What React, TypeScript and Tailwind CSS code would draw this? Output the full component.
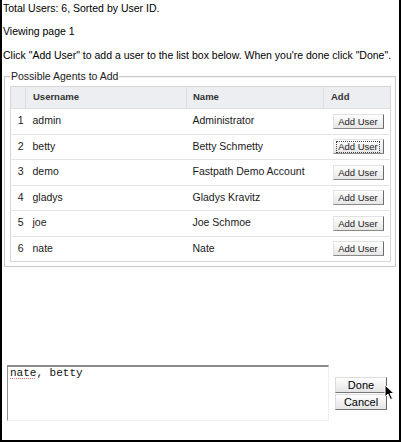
import React from 'react';

const users = [
  { id: 1, username: 'admin', name: 'Administrator' },
  { id: 2, username: 'betty', name: 'Betty Schmetty', focused: true },
  { id: 3, username: 'demo', name: 'Fastpath Demo Account' },
  { id: 4, username: 'gladys', name: 'Gladys Kravitz' },
  { id: 5, username: 'joe', name: 'Joe Schmoe' },
  { id: 6, username: 'nate', name: 'Nate' },
];

const AddUserButton: React.FC<{ focused?: boolean }> = ({ focused }) => (
  <button className="w-[51px] h-[15px] flex items-center justify-center bg-gradient-to-b from-white to-[#e6e6e6] border-t border-l border-[#e2e2e2] border-r border-b border-r-[#6a6a6a] border-b-[#8a8a8a] text-[9.5px] leading-none text-[#222]">
    <span className={focused ? 'outline outline-1 outline-dotted outline-[#444] px-[1px]' : 'px-[1px]'}>Add User</span>
  </button>
);

const SideButton: React.FC<{ label: string }> = ({ label }) => (
  <button className="w-[52px] h-[16px] flex items-center justify-center bg-gradient-to-b from-white to-[#e4e4e4] border-t border-l border-[#dcdcdc] border-r border-b border-r-[#666] border-b-[#777] text-[11px] leading-none text-black">
    {label}
  </button>
);

export default function App() {
  return (
    <div
      className="relative w-[401px] h-[442px] bg-white border-l-2 border-r-2 border-b-2 border-black text-black text-[10.5px]"
      style={{ fontFamily: '"Liberation Sans", Arial, Helvetica, sans-serif' }}
    >
      <div className="pl-[1px] pt-[1px] leading-[14px]">Total Users: 6, Sorted by User ID.</div>
      <div className="pl-[1px] mt-[9px] leading-[14px]">Viewing page 1</div>
      <div className="pl-[1px] mt-[10px] leading-[14px]">
        Click "Add User" to add a user to the list box below. When you're done click "Done".
      </div>

      <fieldset className="mt-[7px] ml-[2px] w-[392px] border border-[#c9c9c9] pl-[5px] pr-[4px] pt-[3px] pb-[4px] shadow-[inset_0_1px_0_#f2f2f2]">
        <legend className="px-[1px] leading-[14px] text-[#222]">Possible Agents to Add</legend>
        <table className="w-[380px] border border-[#d6d6d6] border-collapse table-fixed">
          <colgroup>
            <col className="w-[15px]" />
            <col className="w-[161px]" />
            <col className="w-[137px]" />
            <col className="w-[67px]" />
          </colgroup>
          <thead>
            <tr className="h-[22px] bg-[#eceef1] text-[9.5px] font-bold text-[#333]">
              <th className="border-r border-b border-[#dedede]"></th>
              <th className="border-r border-b border-[#dedede] text-left pl-[7px]">Username</th>
              <th className="border-r border-b border-[#dedede] text-left pl-[6px]">Name</th>
              <th className="border-b border-[#dedede] text-left pl-[7px]">Add</th>
            </tr>
          </thead>
          <tbody>
            {users.map((u) => (
              <tr key={u.id} className="h-[25.5px] border-b border-[#e4e4e4] last:border-b-0 text-[10.5px] text-[#1a1a1a]">
                <td className="text-right pr-[2px]">{u.id}</td>
                <td className="pl-[7px]">{u.username}</td>
                <td className="pl-[6px]">{u.name}</td>
                <td className="pl-[9px]">
                  <AddUserButton focused={u.focused} />
                </td>
              </tr>
            ))}
          </tbody>
        </table>
      </fieldset>

      <div className="flex mt-[98px] ml-[5px]">
        <div className="w-[322px] h-[56px] border-t-2 border-l border-t-[#8a8a8a] border-l-[#8f8f8f] border-r border-b border-r-[#eeeeee] border-b-[#eeeeee] px-[2px]">
          <div
            className="text-[11px] leading-[12px] font-medium text-[#111]"
            style={{ fontFamily: '"Liberation Mono", "Courier New", monospace' }}
          >
            <span className="underline decoration-dotted decoration-[#e07070] underline-offset-2">nate</span>, betty
          </div>
        </div>
        <div className="flex flex-col ml-[6px] mt-[12px] gap-[1px]">
          <SideButton label="Done" />
          <SideButton label="Cancel" />
        </div>
      </div>

      {/* mouse pointer over Done */}
      <svg className="absolute left-[382px] top-[384px]" width="11" height="17" viewBox="0 0 11 17">
        <path d="M1 1 L1 13 L4 10 L6.5 15.5 L8.5 14.5 L6 9.5 L10 9.5 Z" fill="#000" stroke="#fff" strokeWidth="1" />
      </svg>
    </div>
  );
}
